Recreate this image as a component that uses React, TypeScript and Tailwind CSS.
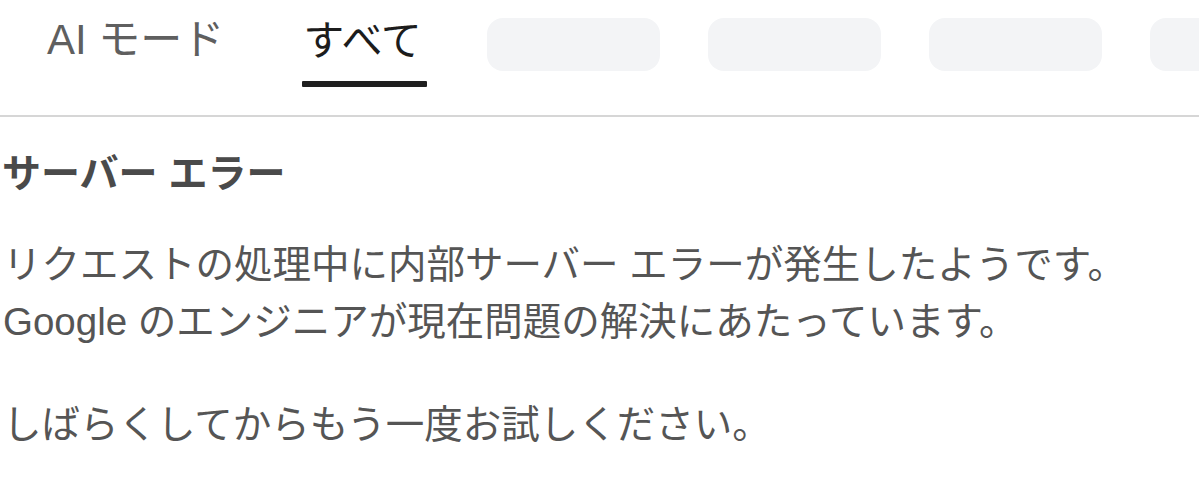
import React from 'react';

const font = { fontFamily: '"Liberation Sans", "Noto Sans CJK JP", sans-serif' };

const pills = [0, 1, 2, 3];

const App: React.FC = () => {
  return (
    <div className="w-[1199px] h-[504px] bg-white overflow-hidden" style={font}>
      {/* Tabs */}
      <div className="flex items-start h-[117px] border-b-2 border-[#d6d6d6] overflow-hidden">
        <div className="pl-[47px] pt-[15px] text-[42px] leading-[50px] text-[#5f5f5f] whitespace-nowrap">AI モード</div>
        <div className="ml-[78px] pt-[16px] flex flex-col shrink-0 w-[125px]">
          <span className="pl-[1px] text-[41px] leading-[50px] text-[#1c1c1c] whitespace-nowrap">すべて</span>
          <span className="mt-[15px] h-[6px] bg-[#1f1f1f] rounded-[1px]" />
        </div>
        <div className="ml-[60px] mt-[18px] flex gap-[48px] shrink-0">
          {pills.map((p) => (
            <div key={p} className="w-[173px] h-[53px] rounded-[16px] bg-[#f3f4f6] shrink-0" />
          ))}
        </div>
      </div>

      {/* Error message */}
      <div className="pl-[2px] pt-[32px]">
        <h1 className="text-[39px] leading-[50px] font-bold text-[#4a4a4a] whitespace-nowrap">サーバー エラー</h1>
        <p className="mt-[37px] pl-[1px] text-[38.5px] leading-[57px] text-[#555555] whitespace-nowrap">
          リクエストの処理中に内部サーバー エラーが発生したようです。
          <br />
          Google のエンジニアが現在問題の解決にあたっています。
        </p>
        <p className="mt-[46px] pl-[1px] text-[38.5px] leading-[57px] text-[#555555] whitespace-nowrap">
          しばらくしてからもう一度お試しください。
        </p>
      </div>
    </div>
  );
};

export default App;
